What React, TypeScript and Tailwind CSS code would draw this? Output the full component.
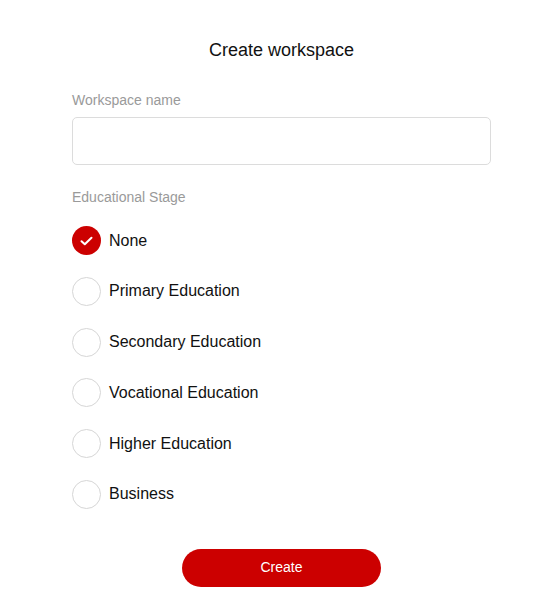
import { useState } from 'react'

const stages = [
  'None',
  'Primary Education',
  'Secondary Education',
  'Vocational Education',
  'Higher Education',
  'Business',
]

export default function App() {
  const [stage, setStage] = useState('None')

  return (
    <div
      className="min-h-[616px] bg-white pl-[72px] pr-[67px] pt-[39px] text-[#111]"
      style={{ fontFamily: '"Liberation Sans", Arial, sans-serif' }}
    >
      <h1 className="text-center text-[18px] leading-[22px]">Create workspace</h1>

      <div className="mt-[30px] text-[14px] leading-[18px] text-[#9a9a9a]">Workspace name</div>
      <input
        className="mt-[8px] block h-[48px] w-full rounded-[5px] border border-[#dcdcdc] px-3 text-[15px] outline-none"
        type="text"
      />

      <div className="mt-[23px] text-[14px] leading-[18px] text-[#9a9a9a]">Educational Stage</div>

      <div className="mt-[20px] flex flex-col gap-[21.8px]">
        {stages.map((s) => {
          const checked = stage === s
          return (
            <button
              key={s}
              onClick={() => setStage(s)}
              className="flex items-center gap-[8px] text-left"
            >
              {checked ? (
                <span className="flex h-[29px] w-[29px] items-center justify-center rounded-full bg-[#cc0000]">
                  <svg width="13" height="10" viewBox="0 0 13 10" fill="none">
                    <path
                      d="M1.5 5.2 L4.8 8.3 L11.5 1.7"
                      stroke="white"
                      strokeWidth="2"
                      strokeLinecap="round"
                      strokeLinejoin="round"
                    />
                  </svg>
                </span>
              ) : (
                <span className="h-[29px] w-[29px] rounded-full border border-[#d6d6d6]" />
              )}
              <span className="text-[16px] leading-[20px] text-[#111]">{s}</span>
            </button>
          )
        })}
      </div>

      <div className="mt-[40px] flex justify-center">
        <button className="h-[38px] w-[199px] rounded-full bg-[#cc0000] text-[14px] text-white">
          Create
        </button>
      </div>
    </div>
  )
}
